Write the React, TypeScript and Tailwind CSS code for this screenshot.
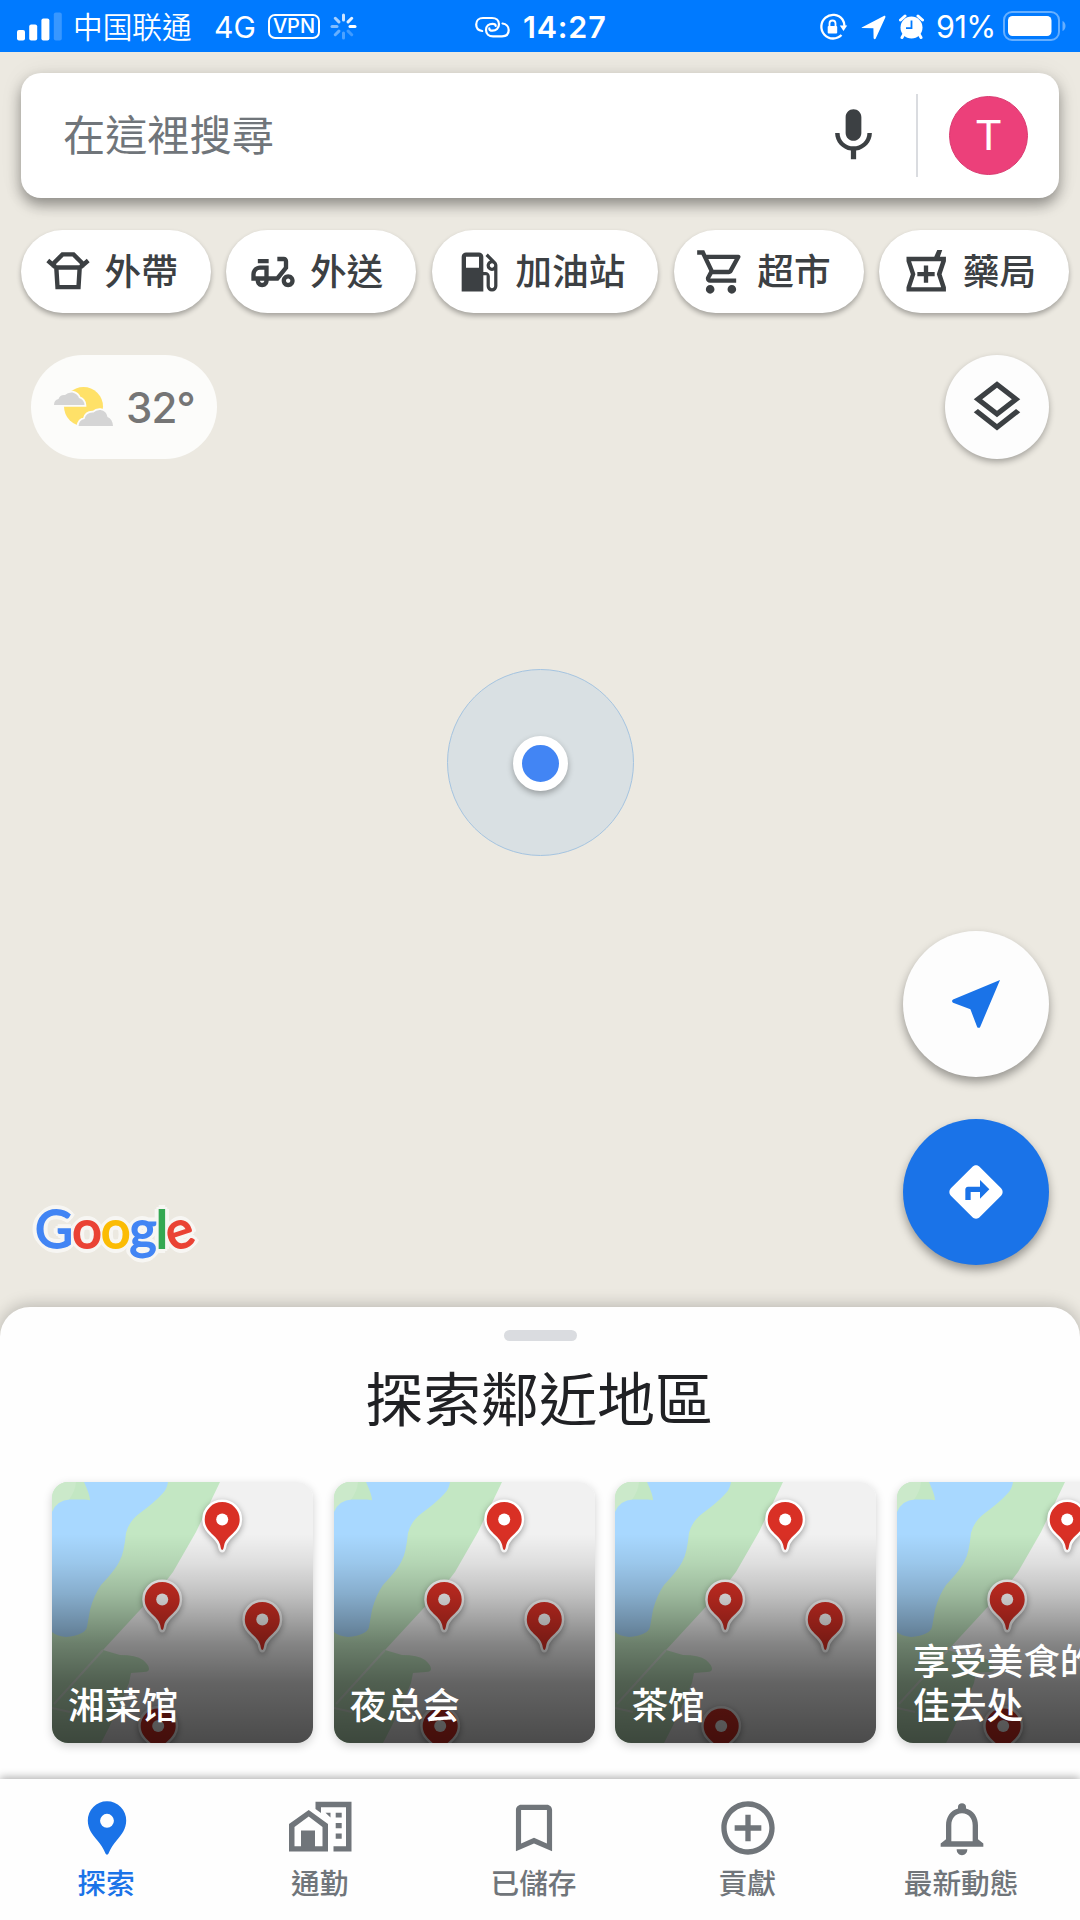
import React from "react";
import {
  MdAddCircleOutline,
  MdBookmarkBorder,
  MdDirections,
  MdLocalGasStation,
  MdMic,
  MdOutlineLayers,
  MdOutlineShoppingCart,
} from "react-icons/md";

function TakeoutIcon() {
  return (
    <svg className="size-[52px] shrink-0" viewBox="0 0 52 52" fill="none" stroke="currentColor" strokeWidth="4.4">
      <path d="M12 21.500v-4.500l8.500-8.600h11l8.500 8.600v4.500M5.800 14.500l7.500 6.500M46.200 14.500l-7.500 6.500M12.500 21.500h27M14.300 21.500l1.200 19.600h21l1.200-19.600" />
    </svg>
  );
}

function MopedIcon() {
  return (
    <svg className="size-[52px] shrink-0" viewBox="0 0 24 24" fill="currentColor" fillRule="evenodd">
      <path d="M19 7c0-1.100-.9-2-2-2h-3v2h3v2.650L13.520 14H10V9H6c-2.210 0-4 1.790-4 4v3h2c0 1.660 1.340 3 3 3s3-1.340 3-3h4.480L19 10.350zM4 14v-1c0-1.100.9-2 2-2h2v3zm3 3c-.55 0-1-.45-1-1h2c0 .55-.45 1-1 1z" />
      <path d="M5 6h5v2H5zM19 13c-1.660 0-3 1.340-3 3s1.340 3 3 3 3-1.340 3-3-1.340-3-3-3zm0 4c-.55 0-1-.45-1-1s.45-1 1-1 1 .45 1 1-.45 1-1 1z" />
    </svg>
  );
}

function PharmacyIcon() {
  return (
    <svg className="size-[52px] shrink-0" viewBox="0 0 24 24" fill="currentColor">
      <path d="M21.200 5h-2.800l1.100-3.200h-2.300L15.800 5H3v2l2 6-2 6v2h18.200v-2l-2-6 2-6zm-4 8.630L19 19H5.110l1.790-5.370.21-.63-.21-.63L5.110 7H19l-1.800 5.370-.2.630zM13 9h-2v3H8v2h3v3h2v-3h3v-2h-3z" />
    </svg>
  );
}

const chips = [
  { label: "外帶", icon: <TakeoutIcon /> },
  { label: "外送", icon: <MopedIcon /> },
  { label: "加油站", icon: <MdLocalGasStation className="size-[52px] shrink-0" /> },
  { label: "超市", icon: <MdOutlineShoppingCart className="size-[52px] shrink-0" /> },
  { label: "藥局", icon: <PharmacyIcon /> },
];

function StatusBar() {
  return (
    <header className="flex h-[52px] shrink-0 items-center bg-[#007aff] text-white">
      <svg className="ml-[17px] h-[30px] w-[46px]" viewBox="0 0 46 30" fill="currentColor">
        <rect x="0" y="19" width="8" height="10.500" rx="2" />
        <rect x="12.200" y="13.500" width="8" height="16" rx="2" />
        <rect x="24.400" y="7.500" width="8" height="22" rx="2" />
        <rect x="36.800" y="1.500" width="8" height="28" rx="2" opacity=".22" />
      </svg>
      <span className="ml-[10px] w-[141px] pb-[1px] text-[29.700px] leading-none font-[350] whitespace-nowrap">中国联通</span>
      <span className="w-[54px] pt-[1px] font-[Inter] text-[30px] leading-none whitespace-nowrap">4G</span>
      <span className="flex h-[25px] w-[52px] items-center justify-center rounded-[7px] border-2 border-white font-[Inter] text-[20px] leading-none font-medium">VPN</span>
      <svg className="ml-[10px] size-[27px]" viewBox="-13.500 -13.500 27 27" stroke="currentColor" strokeWidth="3" strokeLinecap="round">
        <path d="M0-6.500v-5" opacity=".8" />
        <path d="M4.600-4.600l3.600-3.600" opacity=".9" />
        <path d="M6.500 0h5" />
        <path d="M4.600 4.600l3.600 3.600" opacity=".25" />
        <path d="M0 6.500v5" opacity=".3" />
        <path d="M-4.600 4.600l-3.600 3.600" opacity=".4" />
        <path d="M-6.500 0h-5" opacity=".5" />
        <path d="M-4.600-4.600l-3.600-3.600" opacity=".65" />
      </svg>
      <svg className="mt-[2px] ml-[118px] h-[24px] w-[35px]" viewBox="0 0 35 24" fill="none" stroke="currentColor" strokeWidth="2.200" strokeLinecap="round">
        <path d="M7.200 16C3.500 15.500 1.200 12.800 1.200 9.500 1.200 5.500 4 3 8 3h9c4 0 7 2.400 7 6.300S21 15.700 17.500 15.700c-2 0-3.200-.9-3.200-2.300" />
        <path d="M27.500 8.500c3.700.5 6.200 3.200 6.200 6.500 0 4-2.700 6.300-6.700 6.300h-9c-4 0-7-2.400-7-6.300s3-6.200 6.500-6.200c2 0 3.200.8 3.200 2.200" />
      </svg>
      <span className="mt-[2px] ml-[13px] font-[Inter] text-[30.500px] leading-none font-semibold tracking-[0.800px]">14:27</span>
      <svg className="mt-[2px] ml-auto h-[28px] w-[29px]" viewBox="0 0 29 28" fill="none" stroke="currentColor" strokeWidth="2.300">
        <path d="M23.500 6.500A11.800 11.800 0 1 0 22.500 22M23.500 6.500c1.300 1.900 2 4.200 2 6.800" />
        <path d="M20.800 12.500h7.400l-3.700 5.600z" fill="currentColor" stroke="none" />
        <rect x="8.700" y="13" width="9.500" height="7.500" rx="1" fill="currentColor" stroke="none" />
        <path d="M10.500 13.500v-3a3 3 0 0 1 6 0v3" strokeWidth="1.800" />
      </svg>
      <svg className="mt-[2px] ml-[13px] size-[25px]" viewBox="0 0 25 25" fill="currentColor">
        <path d="M1.200 12.200 22.800 1c1.200-.5 2 .2 1.500 1.500L14.700 23.400c-.6 1.200-2 .9-2.100-.4l-.2-9.800-10.700-.2c-1.200 0-1.500-.4-.5-.8z" />
      </svg>
      <svg className="mt-[1px] ml-[13px] size-[25px]" viewBox="0 0 25 25">
        <path d="m5 20-2 3.500M20 20l2 3.500M1.500 6 6 2M23.500 6 19 2" stroke="currentColor" strokeWidth="3" strokeLinecap="round" />
        <circle cx="12.500" cy="13.500" r="11" fill="currentColor" />
        <path d="M12.500 6.500v7.700H7" fill="none" stroke="#007aff" strokeWidth="1.800" />
      </svg>
      <span className="mt-[2px] ml-[12px] w-[63px] font-[Inter] text-[30.500px] leading-none tracking-[-0.500px] whitespace-nowrap">91%</span>
      <svg className="ml-[4px] mr-[13px] h-[30px] w-[64px]" viewBox="0 0 64 30" fill="none">
        <rect x="1" y="1" width="55" height="28" rx="8" stroke="white" strokeOpacity=".4" strokeWidth="2" />
        <rect x="5" y="5" width="43.500" height="20" rx="4.500" fill="white" />
        <path d="M59.500 10c4 1.500 4 8.500 0 10z" fill="white" fillOpacity=".4" />
      </svg>
    </header>
  );
}

function SearchBar() {
  return (
    <div className="mx-[21px] mt-[21px] flex h-[125px] items-center rounded-[20px] bg-white pl-[42px] shadow-[0_7px_14px_rgba(0,0,0,0.38),0_0_26px_rgba(0,0,0,0.06)]">
      <span className="pb-[5px] text-[42.200px] leading-none text-[#70757a]">在這裡搜尋</span>
      <MdMic className="ml-auto size-[63px] text-[#3c4043]" />
      <div className="ml-[31px] h-[83px] w-[2px] bg-[#dadce0]" />
      <div className="mr-[31px] ml-[31px] flex size-[79px] items-center justify-center rounded-full border border-[#d93a70] bg-[#ec407a] font-[Roboto] text-[43px] leading-none text-white">T</div>
    </div>
  );
}

function Weather() {
  return (
    <div className="flex h-[104px] w-[186px] items-center rounded-full bg-[#fcfcfa] pl-[23px]">
      <svg className="h-[40px] w-[60px] shrink-0" viewBox="0 0 60 40">
        <circle cx="29.500" cy="19.500" r="19.500" fill="#ffe168" />
        <path d="M0 18q0-5 4.500-6Q6 7.500 11 8q3-3 7.500-2.500Q24 7 25 11q5 1.500 5.500 7z" fill="#d5d5d5" stroke="#fcfcfa" strokeWidth="3.500" paintOrder="stroke" />
        <path d="M24.500 39q.5-6 6-7 1.500-7 9-6.500 3-3 7-2.500 6 1 7 7 5 2 5.500 9z" fill="#d5d5d5" stroke="#fcfcfa" strokeWidth="3.500" paintOrder="stroke" />
      </svg>
      <span className="mt-[2px] ml-[12px] font-[Inter] text-[42px] leading-none font-medium tracking-[-0.900px] text-[#757575]">32°</span>
    </div>
  );
}

function GoogleLogo() {
  return (
    <div className="absolute top-[1142px] left-[35px] flex font-[Lato] text-[52px] leading-[68px] tracking-[-0.800px] [-webkit-text-stroke:1.800px_currentColor] [filter:drop-shadow(2px_2px_0_#f7f6f3)_drop-shadow(-2px_2px_0_#f7f6f3)_drop-shadow(2px_-2px_0_#f7f6f3)_drop-shadow(-2px_-2px_0_#f7f6f3)]">
      <span className="text-[#4285f4]">G</span>
      <span className="text-[#ea4335]">o</span>
      <span className="text-[#fbbc05]">o</span>
      <span className="text-[#4285f4]">g</span>
      <span className="text-[#34a853]">l</span>
      <span className="origin-[50%_62%] -rotate-[18deg] text-[#ea4335]">e</span>
    </div>
  );
}

const pins = [
  [170.2, 37.5],
  [110.2, 117.5],
  [210.3, 137.5],
  [106.2, 244],
];

function PlaceCard({ label }: { label: string }) {
  return (
    <div className="relative flex size-[261px] shrink-0 items-end overflow-hidden rounded-[16px] bg-[#f1f1f1]">
      <svg className="absolute inset-0 size-full" viewBox="0 0 261 261">
        <path d="M0 0h168L144 50 121 90l-10 13-60 65 17 5q16 0 23 5 6 5 6 9 0 3-5 3l-13 1-2 10q-12 30-28 60H0z" fill="#c3e7c3" />
        <path d="M0 0h24Q22 20 0 30z" fill="#cbe9ca" />
        <path d="M32 0h84q-1 7-5 11-8 9-23 20-11 8-14 20-2 20-6 27-3 8-19 25-7 10-11 25l-3 17q-2 8-21 10Q4 154 0 150V30Q5 18 18 17.500h15q6 1 5 .5 0-5-6-18z" fill="#a8d8ff" />
        <path d="m51 168-49 54M0 226l18 4" fill="none" stroke="#e5e5e5" strokeWidth="2" opacity=".7" />
        {pins.map(([x, y]) => (
          <g key={x} transform={`translate(${x} ${y})`} className="[filter:drop-shadow(0_2px_3px_rgba(0,0,0,0.35))]">
            <path d="M0 30.500c-1.200 0-1.400-2.300-2-5C-4.500 15.500-17.500 13-17.500 0a17.500 17.500 0 0 1 35 0c0 13-13 15.500-15.500 25.500-.6 2.700-.8 5-2 5z" fill="#d93025" stroke="white" strokeWidth="5" paintOrder="stroke" />
            <circle r="6" fill="white" />
          </g>
        ))}
      </svg>
      <div className="absolute inset-0 bg-[linear-gradient(to_bottom,rgba(0,0,0,0)_20%,rgba(0,0,0,0.08)_31%,rgba(0,0,0,0.2)_43%,rgba(0,0,0,0.45)_62%,rgba(0,0,0,0.59)_77%,rgba(0,0,0,0.69)_100%)]" />
      <p className="relative mx-[16px] mb-[18px] text-[36.700px] leading-[44px] font-medium text-white">{label}</p>
    </div>
  );
}

function PinIcon() {
  return (
    <svg className="size-[64px]" viewBox="0 0 24 24" fill="currentColor">
      <path fillRule="evenodd" d="M12 2a7.100 7.100 0 0 0-7.200 7.200c0 3.200 1.700 5.200 3.600 7.500 1.300 1.600 2.200 2.800 3 4.800.2.400.3.500.6.500s.4-.1.600-.5c.8-2 1.700-3.200 3-4.800 1.900-2.300 3.600-4.300 3.600-7.500A7.100 7.100 0 0 0 12 2zm0 9.900a2.600 2.600 0 1 1 0-5.200 2.600 2.600 0 0 1 0 5.200z" />
    </svg>
  );
}

function CommuteIcon() {
  return (
    <svg className="mr-[2px] size-[64px]" viewBox="0 0 64 64" fill="currentColor">
      <path fillRule="evenodd" d="M1 55.500V28l19.700-14L40 28v27.500zM6.500 50.300h28V31L20.700 20.500 6.500 31z" />
      <path d="M13 34.500h14v17H13z" />
      <path d="M27.500 5.800h36v49.700h-18v-5.200H58V11.200H33V17l-5.500-4zM47.700 16.800h6v4.600h-6zM47.700 27h6v5.200h-6zM47.700 37.500h6v5.200h-6zM37.500 16.800h5v4.600z" />
    </svg>
  );
}

function BellIcon() {
  return (
    <svg className="size-[64px]" viewBox="0 0 24 24" fill="currentColor">
      <path d="M12 22.200c1.100 0 2-.9 2-2.200h-4c0 1.300.9 2.200 2 2.200zm6-6v-5.200c0-3.070-1.630-5.640-4.500-6.320V4c0-.83-.67-1.300-1.500-1.300s-1.500.47-1.500 1.300v.68C7.640 5.360 6 7.920 6 11v5.200l-2 1.600V19h16v-1.200zm-2 .8H8v-6c0-2.480 1.510-4.500 4-4.500s4 2.020 4 4.500z" />
    </svg>
  );
}

const tabs = [
  { label: "探索", icon: <PinIcon />, active: true },
  { label: "通勤", icon: <CommuteIcon /> },
  { label: "已儲存", icon: <MdBookmarkBorder className="size-[62px]" /> },
  { label: "貢獻", icon: <MdAddCircleOutline className="size-[64px]" /> },
  { label: "最新動態", icon: <BellIcon /> },
];

export default function App() {
  return (
    <div className="flex h-[1920px] w-[1080px] flex-col overflow-hidden bg-[#ece9e1] font-['Noto_Sans_CJK_TC','Noto_Sans_CJK_SC',sans-serif]">
      <StatusBar />
      <main className="relative flex h-[1255px] shrink-0 flex-col">
        <SearchBar />
        <div className="mt-[32px] ml-[21px] flex gap-[15.500px]">
          {chips.map((chip) => (
            <button key={chip.label} className="flex h-[83px] shrink-0 items-center gap-[10.500px] rounded-full bg-white pr-[33px] pl-[21px] text-[36.700px] leading-none font-medium text-[#3c4043] shadow-[0_3px_5px_rgba(0,0,0,0.3)]">
              {chip.icon}
              <span className="pb-[4px] whitespace-nowrap">{chip.label}</span>
            </button>
          ))}
        </div>
        <div className="mx-[31px] mt-[42px] flex justify-between">
          <Weather />
          <button className="flex size-[104px] items-center justify-center rounded-full bg-[#fdfdfd] text-[#3c4043] shadow-[0_3px_6px_rgba(0,0,0,0.3)]">
            <MdOutlineLayers className="size-[62px]" />
          </button>
        </div>
        <div className="absolute top-[617px] left-[447px] flex size-[187px] items-center justify-center rounded-full border border-[#a5c4e0] bg-[#d9e0e3]">
          <div className="mt-px size-[55px] rounded-full border-[9px] border-white bg-[#4285f4] shadow-[0_3px_6px_rgba(0,0,0,0.3)]" />
        </div>
        <div className="mt-auto mr-[31px] mb-[42px] flex flex-col items-end gap-[42px]">
          <button className="flex size-[146px] items-center justify-center rounded-full bg-[#fdfdfd] text-[#1a73e8] shadow-[0_5px_10px_rgba(0,0,0,0.36)]">
            <svg className="size-[64px]" viewBox="0 0 24 24" fill="currentColor">
              <path d="M21 3 3.400 10.300c-.5.200-.5 1 0 1.200l6.500 2.500 2.500 6.500c.2.600 1 .6 1.200 0z" />
            </svg>
          </button>
          <button className="flex size-[146px] items-center justify-center rounded-full bg-[#1a73e8] text-white shadow-[0_5px_10px_rgba(0,0,0,0.36)]">
            <MdDirections className="size-[64px]" />
          </button>
        </div>
        <GoogleLogo />
      </main>
      <section className="flex h-[472px] shrink-0 flex-col rounded-t-[30px] bg-[#fefefe] shadow-[0_-2px_16px_rgba(0,0,0,0.22)]">
        <div className="mt-[23px] h-[11px] w-[73px] self-center rounded-full bg-[#dadce0]" />
        <h1 className="mt-[26px] self-center pr-[2px] text-[58px] leading-[58px] font-normal text-[#202124]">探索鄰近地區</h1>
        <div className="mt-[57px] ml-[52px] flex gap-[20.700px]">
          {["湘菜馆", "夜总会", "茶馆", "享受美食的最佳去处"].map((label) => (
            <div key={label} className="shrink-0 rounded-[16px] shadow-[0_3px_10px_rgba(0,0,0,0.18)]">
              <PlaceCard label={label} />
            </div>
          ))}
        </div>
      </section>
      <nav className="relative grid h-[141px] w-[1080px] shrink-0 grid-cols-5 bg-[#fefefe] pr-[11px] shadow-[0_-2px_8px_rgba(0,0,0,0.3)]">
        {tabs.map((tab) => (
          <button key={tab.label} className={tab.active ? "flex flex-col items-center pt-[17px] text-[#1a73e8]" : "flex flex-col items-center pt-[17px] text-[#70757a]"}>
            <span className="flex h-[64px] items-center">{tab.icon}</span>
            <span className="mt-[7px] pr-[2px] text-[28.700px] leading-[29px] font-medium whitespace-nowrap">{tab.label}</span>
          </button>
        ))}
      </nav>
    </div>
  );
}
